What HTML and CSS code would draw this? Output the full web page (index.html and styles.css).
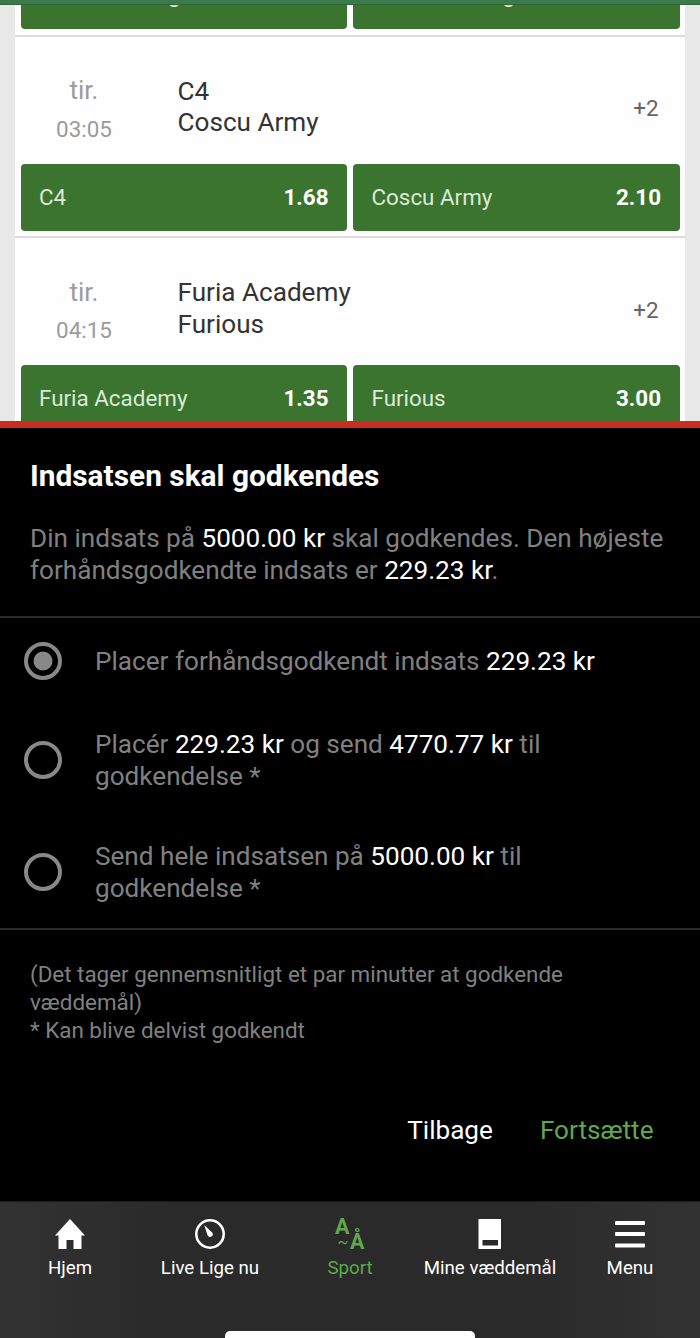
FILE: index.html
```html
<!doctype html>
<html lang="da">
    <head>
        <meta charset="UTF-8" />
        <meta name="viewport" content="width=device-width, initial-scale=1.0" />
        <title>Indsatsen skal godkendes</title>
        <link rel="stylesheet" href="styles.css">
    </head>
    <body>
        <div class="statusbar"></div>
        <main class="events">
            <section class="event event-first">
                <div class="odds">
                    <button class="odd"><span class="cut-left">g</span></button>
                    <button class="odd"><span class="cut-right">g</span></button>
                </div>
            </section>
            <section class="event">
                <div class="event-info">
                    <div class="event-time"><span class="day">tir.</span><span class="hour">03:05</span></div>
                    <div class="teams">C4<br>Coscu Army</div>
                    <span class="more">+2</span>
                </div>
                <div class="odds">
                    <button class="odd"><span>C4</span><b>1.68</b></button>
                    <button class="odd"><span>Coscu Army</span><b>2.10</b></button>
                </div>
            </section>
            <section class="event">
                <div class="event-info">
                    <div class="event-time"><span class="day">tir.</span><span class="hour">04:15</span></div>
                    <div class="teams">Furia Academy<br>Furious</div>
                    <span class="more">+2</span>
                </div>
                <div class="odds">
                    <button class="odd"><span>Furia Academy</span><b>1.35</b></button>
                    <button class="odd"><span>Furious</span><b>3.00</b></button>
                </div>
            </section>
        </main>

        <div class="dialog">
            <div class="dialog-head">
                <h1>Indsatsen skal godkendes</h1>
                <p>Din indsats på <em>5000.00 kr</em> skal godkendes. Den højeste<br>forhåndsgodkendte indsats er <em>229.23 kr</em>.</p>
            </div>
            <div class="options">
                <label class="option option-single">
                    <input type="radio" name="stake" checked>
                    <span>Placer forhåndsgodkendt indsats <em>229.23 kr</em></span>
                </label>
                <label class="option">
                    <input type="radio" name="stake">
                    <span>Placér <em>229.23 kr</em> og send <em>4770.77 kr</em> til<br>godkendelse *</span>
                </label>
                <label class="option">
                    <input type="radio" name="stake">
                    <span>Send hele indsatsen på <em>5000.00 kr</em> til<br>godkendelse *</span>
                </label>
            </div>
            <p class="note">(Det tager gennemsnitligt et par minutter at godkende<br>væddemål)<br>* Kan blive delvist godkendt</p>
            <div class="actions">
                <button class="back">Tilbage</button>
                <button class="continue">Fortsætte</button>
            </div>
        </div>

        <nav class="tabbar">
            <a class="tab">
                <svg width="30" height="30" viewBox="0 0 30 30"><path fill="#fff" d="M15 0L30 16.5H26.5V30H18.5V21H11.5V30H3.5V16.5H0Z"/></svg>
                Hjem
            </a>
            <a class="tab">
                <svg width="30" height="30" viewBox="0 0 30 30"><circle cx="15" cy="15" r="13.7" fill="none" stroke="#fff" stroke-width="2.6"/><path fill="#fff" d="M9.2 6L16.6 12.9A2.8 2.8 0 1 1 12.3 15.6Z"/></svg>
                Live Lige nu
            </a>
            <a class="tab active">
                <svg class="sport-icon" width="30" height="30" viewBox="0 0 30 30"><text class="letter" x="0" y="15">A</text><text class="tilde" x="2.5" y="29">~</text><text class="letter" x="15" y="30">Å</text></svg>
                Sport
            </a>
            <a class="tab">
                <svg width="24" height="30" viewBox="0 0 24 30"><path fill="#fff" fill-rule="evenodd" d="M.5 0H23V30H.5ZM4.5 21V26.5H20V21Z"/></svg>
                Mine væddemål
            </a>
            <a class="tab">
                <svg width="30" height="30" viewBox="0 0 30 30"><g fill="#fff"><rect y="2" width="30" height="4" rx="1"/><rect y="13" width="30" height="4" rx="1"/><rect y="24.5" width="30" height="4" rx="1"/></g></svg>
                Menu
            </a>
            <div class="home-indicator"></div>
        </nav>
    </body>
</html>
```
FILE: styles.css
```css
* {
    box-sizing: border-box;
}
body {
    margin: 0;
    height: 1338px;
    display: flex;
    flex-direction: column;
    overflow: hidden;
    background: #000;
    font-family: Roboto, "Liberation Sans", sans-serif;
}
button {
    font: inherit;
    border: none;
    background: none;
    padding: 0;
}
em {
    font-style: normal;
    color: #fff;
}
.statusbar {
    flex: none;
    height: 5px;
    background: #3b7b4b;
    border-bottom: 1px solid #2f663a;
}

/* match list */
.events {
    flex: none;
    height: 415.5px;
    padding: 0 15px;
    overflow: hidden;
    background: #e8e8e8;
}
.event {
    height: 201.4px;
    padding: 0 5.5px;
    background: #fefefe;
    border-top: 2px solid #dcdcdc;
}
.event-first {
    height: 30px;
    border-top: none;
    overflow: hidden;
    display: flex;
    flex-direction: column;
    justify-content: flex-end;
    padding-bottom: 6.5px;
}
.event-info {
    height: 126.8px;
    display: grid;
    grid-template-columns: 127px 1fr auto;
    align-items: center;
    padding: 14px 21px 0 0;
    column-gap: 30px;
}
.event-time {
    display: flex;
    flex-direction: column;
    align-items: center;
    padding-top: 5px;
    color: #9b9b9b;
    line-height: 38.5px;
}
.day {
    font-size: 26px;
}
.hour {
    font-size: 22.4px;
}
.teams {
    font-size: 26.13px;
    line-height: 31.7px;
    color: #333;
}
.more {
    font-size: 22.4px;
    color: #666;
    padding-top: 2px;
}
.odds {
    flex: none;
    display: grid;
    grid-template-columns: 1fr 1fr;
    gap: 6px;
}
.odd {
    height: 67px;
    padding: 0 18.5px 1px;
    display: flex;
    justify-content: space-between;
    align-items: center;
    border-radius: 4px;
    background: #3b742f;
    color: #d9ead6;
    font-size: 22.4px;
}
.odd b {
    color: #fff;
}
.event-first .odd {
    padding-bottom: 2px;
}
.cut-left {
    padding-left: 129px;
}
.cut-right {
    padding-left: 131px;
}

/* approval dialog */
.dialog {
    flex: none;
    height: 780.5px;
    border-top: 7.5px solid #c92d1f;
    color: #808080;
    font-size: 26.13px;
    line-height: 31.7px;
}
.dialog-head {
    height: 190px;
    padding: 30px 30px 0;
    border-bottom: 2px solid #282828;
}
h1 {
    margin: 0 0 29.5px;
    font-size: 29.87px;
    line-height: 36px;
    color: #fff;
}
p {
    margin: 0;
}
.options {
    border-bottom: 2px solid #282828;
}
.option {
    height: 112px;
    padding: 1px 0 0 24px;
    display: flex;
    align-items: center;
    gap: 33px;
}
.option span {
    padding-top: 1px;
}
.option-single {
    height: 86px;
}
.option input {
    appearance: none;
    flex: none;
    width: 38px;
    height: 38px;
    margin: 0;
    border: 4px solid #888;
    border-radius: 50%;
}
.option input:checked {
    background: radial-gradient(circle, #888 9px, transparent 9.8px);
}
.note {
    padding: 30px 30px 0;
    font-size: 22.4px;
    line-height: 28px;
}
.actions {
    display: flex;
    justify-content: flex-end;
    gap: 47px;
    padding: 71px 46.5px 0 0;
}
.back {
    color: #fff;
}
.continue {
    color: #5fa84c;
}

/* bottom navigation */
.tabbar {
    flex: none;
    height: 137px;
    display: grid;
    grid-template-columns: repeat(5, 1fr);
    grid-template-rows: 1fr 7px;
    justify-items: center;
    background: linear-gradient(90deg, #323232, #2a2a2a 25%, #2a2a2a 75%, #323232);
    border-top: 1px solid #1d1d1d;
}
.tab {
    display: flex;
    flex-direction: column;
    align-items: center;
    gap: 7px;
    padding-top: 17px;
    color: #fff;
    font-size: 18.7px;
    line-height: 24px;
    white-space: nowrap;
}
.active {
    color: #5fa84c;
}
.sport-icon {
    fill: #5fa84c;
    overflow: visible;
}
.letter {
    font-size: 21.5px;
    font-weight: bold;
}
.tilde {
    font-size: 16px;
}
.home-indicator {
    grid-column: 1 / -1;
    width: 250px;
    border-radius: 5px 5px 0 0;
    background: #fff;
}
```
